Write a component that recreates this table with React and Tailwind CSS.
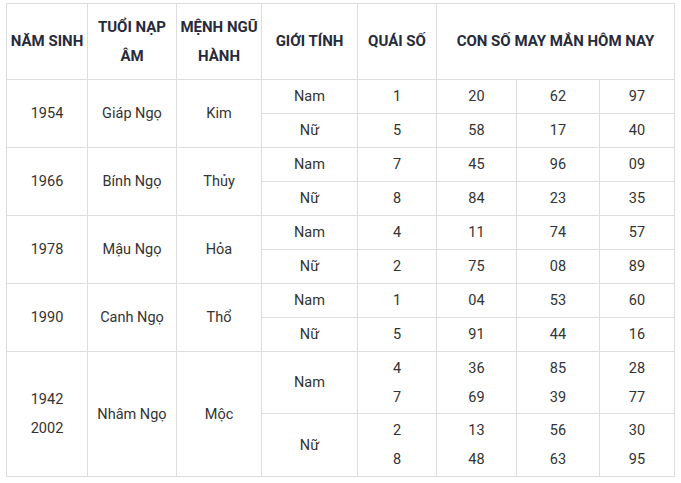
import React from 'react';

const groups = [
  {
    year: ['1954'],
    tuoi: 'Giáp Ngọ',
    menh: 'Kim',
    rows: [
      { gender: 'Nam', qs: ['1'], nums: [['20'], ['62'], ['97']] },
      { gender: 'Nữ', qs: ['5'], nums: [['58'], ['17'], ['40']] },
    ],
  },
  {
    year: ['1966'],
    tuoi: 'Bính Ngọ',
    menh: 'Thủy',
    rows: [
      { gender: 'Nam', qs: ['7'], nums: [['45'], ['96'], ['09']] },
      { gender: 'Nữ', qs: ['8'], nums: [['84'], ['23'], ['35']] },
    ],
  },
  {
    year: ['1978'],
    tuoi: 'Mậu Ngọ',
    menh: 'Hỏa',
    rows: [
      { gender: 'Nam', qs: ['4'], nums: [['11'], ['74'], ['57']] },
      { gender: 'Nữ', qs: ['2'], nums: [['75'], ['08'], ['89']] },
    ],
  },
  {
    year: ['1990'],
    tuoi: 'Canh Ngọ',
    menh: 'Thổ',
    rows: [
      { gender: 'Nam', qs: ['1'], nums: [['04'], ['53'], ['60']] },
      { gender: 'Nữ', qs: ['5'], nums: [['91'], ['44'], ['16']] },
    ],
  },
  {
    year: ['1942', '2002'],
    tuoi: 'Nhâm Ngọ',
    menh: 'Mộc',
    rows: [
      { gender: 'Nam', qs: ['4', '7'], nums: [['36', '69'], ['85', '39'], ['28', '77']], h: 'h-[62px]' },
      { gender: 'Nữ', qs: ['2', '8'], nums: [['13', '48'], ['56', '63'], ['30', '95']], h: 'h-[63px]' },
    ],
  },
];

const td = 'border border-[#dddddd] text-center align-middle p-0';

const Lines = ({ items }) => (
  <>
    {items.map((t, i) => (
      <div key={i}>{t}</div>
    ))}
  </>
);

const App = () => {
  return (
    <div className="bg-white w-[681px] h-[483px] pt-[3px] pl-[6px] font-['Roboto',sans-serif]">
      <table className="table-fixed border-collapse w-[669px] text-[14.5px] leading-[29px] text-[#333333]">
        <colgroup>
          <col className="w-[81px]" />
          <col className="w-[89px]" />
          <col className="w-[85px]" />
          <col className="w-[96px]" />
          <col className="w-[79px]" />
          <col className="w-[80px]" />
          <col className="w-[83px]" />
          <col className="w-[75px]" />
        </colgroup>
        <thead>
          <tr className="h-[76px] font-bold text-[15px] text-[#272a3a]">
            <th className={td}>NĂM SINH</th>
            <th className={td}>TUỔI NẠP ÂM</th>
            <th className={td}>MỆNH NGŨ HÀNH</th>
            <th className={td}>GIỚI TÍNH</th>
            <th className={td}>QUÁI SỐ</th>
            <th className={td} colSpan={3}>CON SỐ MAY MẮN HÔM NAY</th>
          </tr>
        </thead>
        <tbody>
          {groups.map((g) =>
            g.rows.map((r, i) => (
              <tr key={g.tuoi + r.gender} className={r.h || 'h-[34px]'}>
                {i === 0 && (
                  <>
                    <td className={td} rowSpan={2}><Lines items={g.year} /></td>
                    <td className={td} rowSpan={2}>{g.tuoi}</td>
                    <td className={td} rowSpan={2}>{g.menh}</td>
                  </>
                )}
                <td className={td}>{r.gender}</td>
                <td className={td}><Lines items={r.qs} /></td>
                {r.nums.map((n, j) => (
                  <td key={j} className={td}><Lines items={n} /></td>
                ))}
              </tr>
            ))
          )}
        </tbody>
      </table>
    </div>
  );
};

export default App;
